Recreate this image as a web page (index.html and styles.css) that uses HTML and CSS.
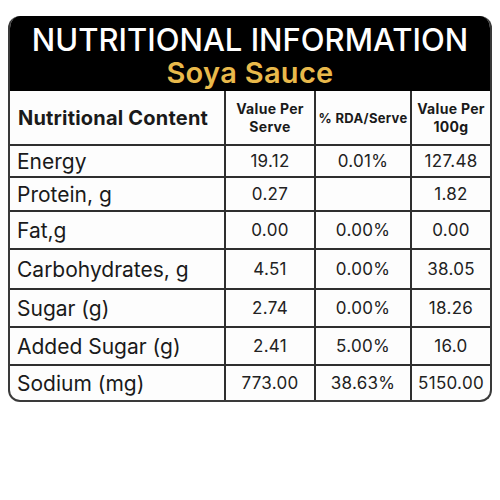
FILE: index.html
```html
<!DOCTYPE html>
<html lang="en">
<head>
  <meta charset="UTF-8" />
  <title>Nutritional Information - Soya Sauce</title>
  <link rel="stylesheet" href="styles.css">
</head>
<body>
  <div class="card">
    <div class="banner">
      <h1>NUTRITIONAL INFORMATION</h1>
      <h2>Soya Sauce</h2>
    </div>
    <table class="facts">
      <colgroup>
        <col class="c-name">
        <col class="c-serve">
        <col class="c-rda">
        <col class="c-100">
      </colgroup>
      <thead>
        <tr>
          <th class="name">Nutritional Content</th>
          <th>Value Per<br>Serve</th>
          <th class="rda">% RDA/Serve</th>
          <th>Value Per<br>100g</th>
        </tr>
      </thead>
      <tbody>
        <tr class="r1"><td class="name">Energy</td><td>19.12</td><td>0.01%</td><td>127.48</td></tr>
        <tr class="r2"><td class="name">Protein, g</td><td>0.27</td><td></td><td>1.82</td></tr>
        <tr class="r3"><td class="name">Fat,g</td><td>0.00</td><td>0.00%</td><td>0.00</td></tr>
        <tr class="r4"><td class="name">Carbohydrates, g</td><td>4.51</td><td>0.00%</td><td>38.05</td></tr>
        <tr class="r5"><td class="name">Sugar (g)</td><td>2.74</td><td>0.00%</td><td>18.26</td></tr>
        <tr class="r6"><td class="name">Added Sugar (g)</td><td>2.41</td><td>5.00%</td><td>16.0</td></tr>
        <tr class="r7"><td class="name">Sodium (mg)</td><td>773.00</td><td>38.63%</td><td>5150.00</td></tr>
      </tbody>
    </table>
  </div>
</body>
</html>
```

FILE: styles.css
```css
* {
  box-sizing: border-box;
}

body {
  margin: 0;
  padding: 16px 8px;
  background: #fff;
  font-family: 'Inter', 'Open Sans', sans-serif;
  color: #1a1a1a;
}

.card {
  width: 484px;
  border: 2px solid #3a3a3a;
  border-top: none;
  border-radius: 12px;
  overflow: hidden;
  background: #fdfdfd;
}

.banner {
  background: #000;
  text-align: center;
  height: 75px;
  padding-top: 5px;
}

.banner h1 {
  margin: 0;
  color: #fff;
  font-size: 31px;
  font-weight: 500;
  line-height: 38px;
}

.banner h2 {
  margin: 0;
  color: #e9b94b;
  font-size: 29px;
  font-weight: 600;
  line-height: 28px;
  letter-spacing: 0.3px;
}

.facts {
  width: 100%;
  border-collapse: collapse;
  table-layout: fixed;
}

.c-name { width: 215px; }
.c-serve { width: 90px; }
.c-rda { width: 96px; }

.facts th,
.facts td {
  border-right: 2px solid #2e2e2e;
  border-bottom: 2px solid #2e2e2e;
  text-align: center;
  padding: 0;
}

.facts th:last-child,
.facts td:last-child {
  border-right: none;
}

.facts tbody tr:last-child td {
  border-bottom: none;
}

.facts thead tr {
  height: 54px;
}

.facts th {
  font-size: 14px;
  font-weight: 700;
  line-height: 18px;
  letter-spacing: 0.3px;
}

.facts th.name {
  font-size: 20px;
  text-align: left;
  padding-left: 8px;
  letter-spacing: 0.2px;
}

.facts th.rda {
  font-size: 13px;
  letter-spacing: 0.3px;
}

.facts td {
  font-size: 17px;
  letter-spacing: 0.3px;
  color: #222;
}

.facts td.name {
  text-align: left;
  padding-left: 7px;
  font-size: 21px;
  letter-spacing: 0;
  color: #1a1a1a;
}

.r1 { height: 32px; }
.r2 { height: 34px; }
.r3 { height: 38px; }
.r4 { height: 40px; }
.r5 { height: 38px; }
.r6 { height: 38px; }
.r7 { height: 35px; }
```
